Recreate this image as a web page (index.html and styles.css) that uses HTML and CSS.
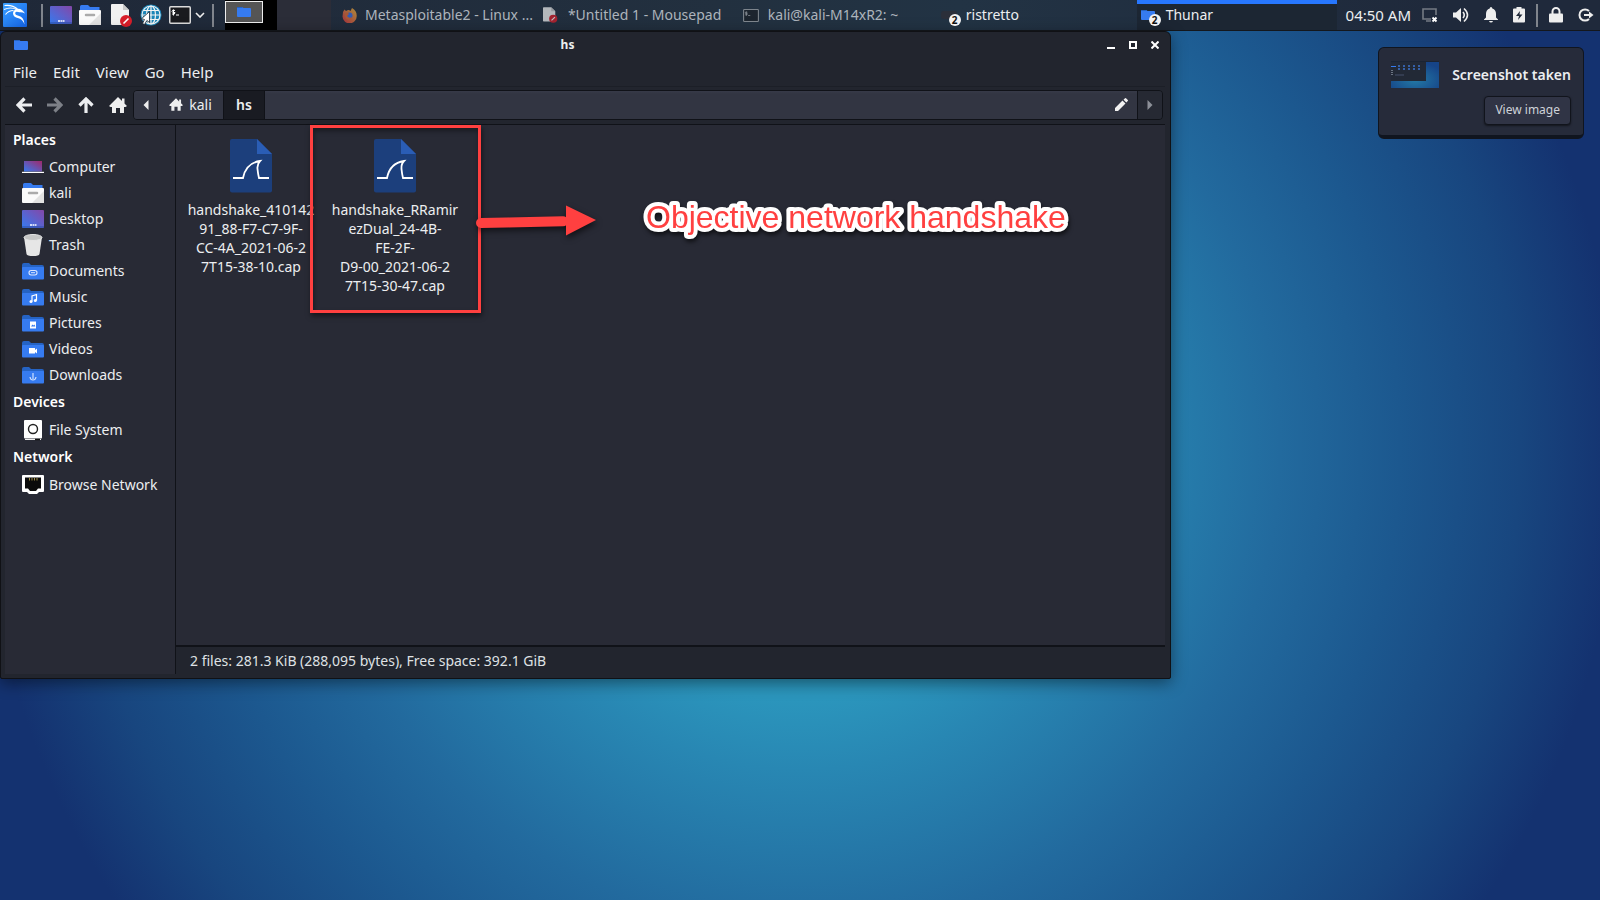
FILE: index.html
```html
<!DOCTYPE html>
<html lang="en">
<head>
<meta charset="utf-8">
<meta name="viewport" content="width=device-width, initial-scale=1">
<title>hs - Thunar</title>
<link rel="stylesheet" href="styles.css">
</head>
<body>
<svg class="defs" aria-hidden="true">
  <defs>
    <linearGradient id="screen" x1="0" y1="1" x2="1" y2="0"><stop offset="0" stop-color="#367bf0"/><stop offset="1" stop-color="#8447a8"/></linearGradient>
    <linearGradient id="laptop" x1="0" y1="1" x2="1" y2="0"><stop offset="0" stop-color="#367bf0"/><stop offset="1" stop-color="#a0286a"/></linearGradient>
    <linearGradient id="kali" x1="0" y1="0" x2="1" y2="1"><stop offset="0" stop-color="#3aa0ff"/><stop offset="1" stop-color="#1464e8"/></linearGradient>
    <linearGradient id="fire" x1="1" y1="0" x2="0" y2="1"><stop offset="0" stop-color="#e8b63a"/><stop offset="1" stop-color="#d8323c"/></linearGradient>
    <radialGradient id="thumb" cx=".5" cy=".7" r=".65"><stop offset="0" stop-color="#2379a5"/><stop offset="1" stop-color="#164488"/></radialGradient>
  </defs>
  <symbol id="desktop" viewBox="0 0 22 18"><rect width="22" height="18" rx="1" fill="url(#screen)"/><path d="M0 17h22" stroke="#2d4ba0" stroke-width="1"/><path d="M8 15h2M10.500 15h2M13 15h1.500" stroke="#fff" stroke-width="1.500"/></symbol>
  <symbol id="home-folder" viewBox="0 0 22 20"><path d="M1 1.500q0-1.500 1.500-1.500H9l2 2h9.500v5H1z" fill="#367bf0"/><rect y="5" width="22" height="15" rx="1" fill="#fafafa"/><path d="M10 20L22 8v12z" fill="#e2e2e2"/><path d="M7 10h8" stroke="#aaa" stroke-width="2.500" stroke-linecap="round"/></symbol>
  <symbol id="folder" viewBox="0 0 22 17"><path d="M0 2q0-2 2-2h5l2 2h11q2 0 2 2v4H0z" fill="#2563c4"/><rect y="4" width="22" height="12.500" rx="1" fill="#367bf0"/></symbol>
  <symbol id="small-folder" viewBox="0 0 14 10"><path d="M0 1q0-1 1-1h4l1.500 1H13q1 0 1 1v7q0 1-1 1H1q-1 0-1-1z" fill="#367bf0"/><path d="M0 0h5l1 1H0z" fill="#2563c4"/></symbol>
  <symbol id="notepad" viewBox="0 0 22 23"><path d="M0 1q0-1 1-1h11l6 6v14q0 1-1 1H1q-1 0-1-1z" fill="#f1f1f1"/><path d="M12 0v6h6z" fill="#c8c8c8"/><circle cx="15" cy="17" r="6" fill="#d81e2a"/><path d="M12.500 19.500l5-5" stroke="#fff" stroke-width="1.600"/></symbol>
  <symbol id="terminal" viewBox="0 0 22 18"><rect x=".75" y=".75" width="20.500" height="16.500" rx="1" fill="#191a1e" stroke="#dcdcdc" stroke-width="1.500"/><path d="M6 4.500q-3-1-3 .8t3 1.200q0 2.500-3 1.500M4.500 3.500v6M7 9h3" stroke="#fff" fill="none"/></symbol>
  <symbol id="house" viewBox="0 0 18 16"><path d="M9 0l4 4V1.500h2.500v5L18 9l-1.500 1H15v6h-4v-5H7v5H3v-6H1.500L0 9z" fill="#eee"/></symbol>
  <symbol id="arrow" viewBox="0 0 16 16"><path d="M8.500 1.500L2 8l6.500 6.500M2 8h14" fill="none" stroke="currentColor" stroke-width="3.200"/></symbol>
  <symbol id="capture" viewBox="0 0 42 54"><path d="M0 2q0-2 2-2h25l15 15v36.500q0 2-2 2H2q-2 0-2-2z" fill="#1c3f7c"/><path d="M27 0l15 15H27z" fill="#2a5db5"/><path d="M3 39h10q3-15 17-17-3 3-2.500 8T29 39h10" fill="none" stroke="#fff" stroke-width="1.800"/></symbol>
</svg>

<header class="panel">
  <div class="launchers">
    <button class="plain" aria-label="Applications"><svg width="24" height="24" viewBox="0 0 24 24"><rect width="24" height="24" rx="1" fill="url(#kali)"/><path d="M1.500 2.500q8-1 13 3.500M1 6.500q7-3 12.500 0M2.500 11.500q3-4 8-4" fill="none" stroke="#fff" stroke-width="1.200"/><path d="M13.500 6q5-1.500 8.500 4.500-2.500-1.500-5.500-1.200-4-1.300-4.300.7-.2 2 3.300 2.700 5.500 1 6 8.800-2-5.500-6-6.300-5.500-1.200-5.500-5 .2-3 3.500-4.200z" fill="#fff"/></svg></button>
    <span class="sep sep-first"></span>
    <button class="plain" aria-label="Show desktop"><svg width="22" height="18"><use href="#desktop"/></svg></button>
    <button class="plain" aria-label="Home folder"><svg width="22" height="20"><use href="#home-folder"/></svg></button>
    <button class="plain editor" aria-label="Text editor"><svg width="22" height="23"><use href="#notepad"/></svg></button>
    <button class="plain" aria-label="Web browser"><svg width="22" height="22" viewBox="0 0 22 22"><circle cx="11" cy="11" r="10.500" fill="#1b86b8"/><g fill="none" stroke="#f4f4f4" stroke-width="1.200"><circle cx="11" cy="11" r="9"/><ellipse cx="11" cy="11" rx="4.500" ry="9"/><path d="M2 11h18M11 2v18M3.500 6.500h15M3.500 15.500h15"/></g><path d="M9.500 7.500v11l-2.600-2-2.400 4-2-1 2-4-3-.8z" fill="#fff" stroke="#17222e" stroke-width=".8"/></svg></button>
    <button class="plain" aria-label="Terminal"><svg width="22" height="18"><use href="#terminal"/></svg></button>
    <button class="plain chevron" aria-label="More terminals"><svg width="10" height="6" viewBox="0 0 10 6"><path d="M1 1l4 4 4-4" fill="none" stroke="#eee" stroke-width="1.600"/></svg></button>
    <span class="sep"></span>
  </div>
  <div class="pager"><span class="workspace"><svg width="14" height="10"><use href="#small-folder"/></svg></span></div>
  <nav class="tasks" aria-label="Open windows">
    <button class="task dim"><span class="task-icon"><svg width="15" height="15" viewBox="0 0 15 15"><path d="M1 4l1.500-2.500L4 3q2-1.500 3-1l1.500 1L10 0q5 3 4.700 8A7 7 0 0 1 .5 8.500z" fill="url(#fire)"/><circle cx="7.500" cy="7.500" r="3" fill="#3a70e8"/><path d="M3 5q3-1 4 1L5 8q2 3 5 1-1 3-4 2.500T3 5z" fill="#e26a33"/></svg></span><span class="task-text">Metasploitable2 - Linux ...</span></button>
    <button class="task dim"><span class="task-icon"><svg width="15" height="16"><use href="#notepad"/></svg></span><span class="task-text">*Untitled 1 - Mousepad</span></button>
    <button class="task dim"><span class="task-icon"><svg width="16" height="13"><use href="#terminal" opacity=".7"/></svg></span><span class="task-text">kali@kali-M14xR2: ~</span></button>
    <button class="task"><span class="task-icon"><svg width="16" height="10" viewBox="0 0 16 10"><rect y="1" width="16" height="8" rx="3" fill="#2b2f3a"/></svg><span class="count">2</span></span><span class="task-text">ristretto</span></button>
    <button class="task active"><span class="task-icon"><svg width="14" height="10"><use href="#small-folder"/></svg><span class="count">2</span></span><span class="task-text">Thunar</span></button>
  </nav>
  <div class="tray">
    <time class="clock">04:50 AM</time>
    <button class="plain" aria-label="Display"><svg width="16" height="16" viewBox="0 0 16 16"><path d="M9 12H1V2h13v6" fill="none" stroke="#747a84" stroke-width="1.600"/><path d="M4 14h5" stroke="#747a84" stroke-width="1.500"/><path d="M10.500 10.500l4 4m0-4l-4 4" stroke="#fff" stroke-width="1.800"/></svg></button>
    <button class="plain" aria-label="Volume"><svg width="16" height="16" viewBox="0 0 16 16"><path d="M0 5.500h3L8 1v14l-5-4.500H0z" fill="#eee"/><path d="M10 5q2.500 3 0 6M11 1.500q7 6.500 0 13" fill="none" stroke="#eee" stroke-width="1.600"/></svg></button>
    <button class="plain" aria-label="Notifications"><svg width="14" height="16" viewBox="0 0 14 16"><path d="M7 0q1.300 0 1.300 1.500Q12 2.500 12 7v3.500l2 2V13H0v-.5l2-2V7q0-4.500 3.700-5.500Q5.700 0 7 0zM5 14h4q-.5 1.500-2 1.500T5 14z" fill="#eee"/></svg></button>
    <button class="plain" aria-label="Battery"><svg width="12" height="16" viewBox="0 0 12 16"><path d="M1 1.500h2.500V0h5v1.500H11q1 0 1 1v12q0 1-1 1H1q-1 0-1-1v-12q0-1 1-1z" fill="#eee"/><path d="M7 4L3 9h3l-1 4 4.500-5.500H6.500z" fill="#1f2838"/></svg></button>
    <span class="sep"></span>
    <button class="plain" aria-label="Lock"><svg width="14" height="16" viewBox="0 0 14 16"><rect y="6.500" width="14" height="9" rx="1" fill="#eee"/><path d="M3.500 7V4.500a3.500 3.500 0 0 1 7 0V7" fill="none" stroke="#eee" stroke-width="2"/></svg></button>
    <button class="plain" aria-label="Log out"><svg width="16" height="14" viewBox="0 0 16 14"><path d="M11 3A5.600 5.600 0 1 0 11 11" fill="none" stroke="#eee" stroke-width="2"/><path d="M6 7h7" stroke="#eee" stroke-width="2"/><path d="M11 3.500L15.500 7 11 10.500z" fill="#eee"/></svg></button>
  </div>
</header>

<main class="desktop">
  <section class="window" aria-label="hs">
    <div class="titlebar">
      <svg width="14" height="10"><use href="#small-folder"/></svg>
      <h1>hs</h1>
      <div class="controls">
        <button class="plain" aria-label="Minimize"><svg width="8" height="8" viewBox="0 0 8 8"><path d="M0 7h8" stroke="#fff" stroke-width="2"/></svg></button>
        <button class="plain" aria-label="Maximize"><svg width="8" height="8" viewBox="0 0 8 8"><rect x="1" y="1" width="6" height="6" fill="none" stroke="#fff" stroke-width="2"/></svg></button>
        <button class="plain" aria-label="Close"><svg width="8" height="8" viewBox="0 0 8 8"><path d="M.5.500l7 7m0-7l-7 7" stroke="#fff" stroke-width="2"/></svg></button>
      </div>
    </div>
    <nav class="menubar" aria-label="Menu">
      <button class="plain">File</button><button class="plain">Edit</button><button class="plain">View</button><button class="plain">Go</button><button class="plain">Help</button>
    </nav>
    <div class="toolbar">
      <div class="nav-buttons">
        <button class="plain" aria-label="Back"><svg width="16" height="16"><use href="#arrow"/></svg></button>
        <button class="plain off" aria-label="Forward"><svg class="flip" width="16" height="16"><use href="#arrow"/></svg></button>
        <button class="plain" aria-label="Up"><svg class="up" width="16" height="16"><use href="#arrow"/></svg></button>
        <button class="plain" aria-label="Home"><svg width="18" height="16"><use href="#house"/></svg></button>
      </div>
      <div class="pathbar">
        <button class="seg step" aria-label="Scroll left"><svg width="6" height="10" viewBox="0 0 6 10"><path d="M5.500 0v10L.5 5z" fill="#eee"/></svg></button>
        <button class="seg kali"><svg width="14" height="13"><use href="#house"/></svg>kali</button>
        <button class="seg current">hs</button>
        <button class="seg edit" aria-label="Edit path"><svg width="13" height="13" viewBox="0 0 13 13"><path d="M0 13v-3l7.500-7.500 3 3L3 13zM8.500 1.700L10 .2q.5-.4 1 0L12.800 2q.4.500 0 1l-1.500 1.500z" fill="#f2f2f2"/></svg></button>
        <button class="seg step last" aria-label="Scroll right"><svg width="6" height="10" viewBox="0 0 6 10"><path d="M.5 0v10l5-5z" fill="#8d9098"/></svg></button>
      </div>
    </div>
    <div class="body">
      <aside class="sidebar">
        <h2>Places</h2>
        <ul>
          <li><a href="#"><svg width="22" height="12" viewBox="0 0 22 12"><rect x="2" width="18" height="10.500" fill="url(#laptop)"/><path d="M0 11.400h22" stroke="#fff" stroke-width="1.200"/></svg>Computer</a></li>
          <li><a href="#"><svg width="22" height="20"><use href="#home-folder"/></svg>kali</a></li>
          <li><a href="#"><svg width="22" height="18"><use href="#desktop"/></svg>Desktop</a></li>
          <li><a href="#"><svg width="22" height="22" viewBox="0 0 22 22"><path d="M2 3l2.500 17q.5 2 6.500 2t6.500-2L20 3z" fill="#e6e6e6"/><ellipse cx="11" cy="3.500" rx="9" ry="3" fill="#c6c6c6" stroke="#e6e6e6"/></svg>Trash</a></li>
          <li><a href="#"><svg width="22" height="17" viewBox="0 0 22 17"><use href="#folder"/><rect x="7" y="7.500" width="8" height="4.500" rx="2.200" fill="none" stroke="#dbe7ff" stroke-width="1.100"/><path d="M9 9.700h4" stroke="#dbe7ff"/></svg>Documents</a></li>
          <li><a href="#"><svg width="22" height="17" viewBox="0 0 22 17"><use href="#folder"/><path d="M10 12.500V7l4.500-1.500v6" fill="none" stroke="#fff" stroke-width="1.200"/><circle cx="9" cy="12.500" r="1.500" fill="#fff"/><circle cx="13.300" cy="11.500" r="1.500" fill="#fff"/></svg>Music</a></li>
          <li><a href="#"><svg width="22" height="17" viewBox="0 0 22 17"><use href="#folder"/><rect x="8" y="6.500" width="6" height="7" fill="#fff"/><path d="M9 11.500l1.500-2 1 1 1-1 .8 2z" fill="#367bf0"/></svg>Pictures</a></li>
          <li><a href="#"><svg width="22" height="17" viewBox="0 0 22 17"><use href="#folder"/><path d="M7 7h6v2l2-1.500v5L13 11v1.500H7z" fill="#fff"/></svg>Videos</a></li>
          <li><a href="#"><svg width="22" height="17" viewBox="0 0 22 17"><use href="#folder"/><path d="M11 6v6M8 10q.5 3 3 3t3-3" fill="none" stroke="#cfe0ff" stroke-width="1.200"/></svg>Downloads</a></li>
        </ul>
        <h2>Devices</h2>
        <ul class="tall">
          <li><a href="#"><svg width="22" height="22" viewBox="0 0 22 22"><rect x="2" y="1" width="18" height="18.500" rx="1" fill="#fff"/><circle cx="11" cy="10" r="4.500" fill="none" stroke="#222" stroke-width="1.400"/><path d="M3 20.500h16" stroke="#eee"/><path d="M13 20.500h5" stroke="#111" stroke-width="1.500"/></svg>File System</a></li>
        </ul>
        <h2>Network</h2>
        <ul class="tall">
          <li><a href="#"><svg width="22" height="19" viewBox="0 0 22 19"><path d="M1 0h20q1 0 1 1v15q0 1-1 1h-4l-2 2H7l-2-2H1q-1 0-1-1V1q0-1 1-1z" fill="#fff"/><path d="M3 2.500h16v11h-3L14 16H8l-2-2.500H3z" fill="#0b0b0b"/><path d="M7.500 3v2.500M10 3v2.500M12.500 3v2.500M15 3v2.500" stroke="#9c8a45"/></svg>Browse Network</a></li>
        </ul>
      </aside>
      <div class="content">
        <div class="files">
          <figure class="file"><svg width="42" height="54"><use href="#capture"/></svg><figcaption>handshake_410142<br>91_88-F7-C7-9F-<br>CC-4A_2021-06-2<br>7T15-38-10.cap</figcaption></figure>
          <figure class="file"><svg width="42" height="54"><use href="#capture"/></svg><figcaption>handshake_RRamir<br>ezDual_24-4B-<br>FE-2F-<br>D9-00_2021-06-2<br>7T15-30-47.cap</figcaption></figure>
          <div class="mark-box"></div>
          <svg class="mark-arrow" width="130" height="40" viewBox="0 0 130 40"><path d="M11 23l82-1.800" stroke="#ff4040" stroke-width="10" stroke-linecap="round"/><path d="M96 5.500L126 20 96 35.500z" fill="#ff4040"/></svg>
          <svg class="mark-text" width="430" height="50"><text class="halo" x="6" y="33" aria-hidden="false">Objective network handshake</text></svg>
        </div>
        <footer class="status">2 files: 281.3 KiB (288,095 bytes), Free space: 392.1 GiB</footer>
      </div>
    </div>
  </section>

  <aside class="notice">
    <svg width="48" height="27" viewBox="0 0 48 27"><rect width="48" height="27" fill="url(#thumb)"/><rect width="35" height="20" fill="#222936"/><path d="M0 .5h48" stroke="#1b2433"/><path d="M0 5.500h5" stroke="#367bf0"/><path d="M7 5h24M7 8h22" stroke="#3560a8" stroke-dasharray="2 3" stroke-width="2"/><path d="M1 9v6" stroke="#6b7482" stroke-dasharray="1 1" stroke-width="2"/><path d="M4 14h9" stroke="#44506a"/></svg>
    <strong>Screenshot taken</strong>
    <button>View image</button>
  </aside>
</main>
</body>
</html>
```
FILE: styles.css
```css
* { box-sizing: border-box; }

body {
  margin: 0;
  min-height: 100vh;
  display: flex;
  flex-direction: column;
  overflow: hidden;
  font: 14px/20px "Noto Sans", sans-serif;
  color: #eceef0;
  background: radial-gradient(circle at center, #2ba3c4 0, #2b95bc 250px, #2887b3 320px, #226a9e 480px, #1c588f 600px, #18467f 720px, #143270 820px);
}

h1, h2, p, ul, figure { margin: 0; padding: 0; }
ul { list-style: none; }
svg { display: block; flex: none; }
button { font: inherit; color: inherit; cursor: pointer; }
.defs { position: absolute; width: 0; height: 0; }

.plain {
  display: flex;
  align-items: center;
  justify-content: center;
  padding: 0;
  border: 0;
  background: none;
}

/* top panel */
.panel {
  display: flex;
  height: 31px;
  flex: none;
  background: linear-gradient(90deg, #1f2838, #22303f 45%, #223344 60%, #1f293b 90%);
  border-bottom: 1px solid #14171c;
}
.sep { width: 2px; height: 23px; background: #80858d; }
.launchers {
  display: flex;
  align-items: center;
  gap: 7px;
  padding: 0 11px 0 3px;
}
.sep-first { margin-left: 7px; }
.editor { margin-left: 3px; }
.chevron { margin-left: -3px; }
.pager { width: 106px; padding-right: 54px; background: linear-gradient(90deg, #000 52px, #2b2d38 52px); }
.workspace {
  display: flex;
  align-items: center;
  justify-content: center;
  width: 38px;
  height: 22px;
  margin-top: 1px;
  border: 1px solid #eee;
  background: #555;
}
.tasks {
  flex: 1;
  min-width: 0;
  display: grid;
  grid-template-columns: repeat(5, minmax(0, 1fr));
  padding-left: 6px;
}
.task {
  display: flex;
  align-items: center;
  gap: 7px;
  padding: 0 4px;
  border: 0;
  background: none;
  white-space: nowrap;
  text-align: left;
}
.task.dim { color: #adb4bc; }
.task.dim svg { opacity: .7; }
.task.active { background: linear-gradient(#2777ff 4px, #1c2633 4px); }
.task-icon { position: relative; width: 18px; display: flex; }
.task.dim .task-icon { width: 20px; justify-content: center; }
.count {
  position: absolute;
  left: 8px;
  top: 4px;
  width: 12px;
  height: 12px;
  border-radius: 50%;
  background: #f2f2f2;
  color: #111;
  font: bold 10px/12px "Noto Sans", sans-serif;
  text-align: center;
}
.tray { display: flex; align-items: center; gap: 15px; padding: 0 6px 0 9px; }
.clock { margin-right: -4px; font-size: 15px; white-space: nowrap; }
.tray .sep { margin: 0 -4px; }

/* file manager window */
.desktop { flex: 1; display: flex; align-items: flex-start; justify-content: space-between; padding-right: 16px; }
.window {
  width: calc(100% - 413px);
  min-height: calc(100vh - 252px);
  display: flex;
  flex-direction: column;
  padding: 0 5px 4px 4px;
  background: #22252e;
  border: 1px solid #101115;
  border-radius: 6px 6px 2px 2px;
  box-shadow: 0 4px 16px rgba(0, 0, 0, .45);
}
.titlebar { display: flex; align-items: center; height: 26px; padding: 0 6px 0 9px; }
.titlebar h1 { flex: 1; font-size: 12px; line-height: 16px; text-align: center; }
.controls { display: flex; gap: 14px; }
.controls .plain { height: 16px; }
.menubar { display: flex; gap: 16px; height: 29px; padding: 0 8px; font-size: 15px; border-bottom: 1px solid #1c1f27; }
.toolbar { display: flex; align-items: center; height: 38px; padding: 0 2px 2px 0; gap: 6px; border-bottom: 1px solid #101218; }
.nav-buttons { display: flex; align-items: center; gap: 15px; padding-left: 11px; }
.off { color: #7d8087; }
.flip { transform: rotate(180deg); }
.up { transform: rotate(90deg); }
.pathbar {
  flex: 1;
  display: flex;
  height: 30px;
  border: 1px solid #101218;
  border-radius: 4px;
  overflow: hidden;
}
.seg {
  display: flex;
  align-items: center;
  justify-content: center;
  gap: 6px;
  padding: 0;
  border: 0;
  border-right: 1px solid #101218;
  background: linear-gradient(#373a48, #323542 3px);
}
.seg.step { width: 24px; }
.seg.kali { width: 66px; }
.seg.current { width: 41px; background: #191b22; font-weight: 600; }
.seg.edit { flex: 1; justify-content: flex-end; padding: 0 9px; }
.seg.last { background: #262933; border-right: 0; }

.body { flex: 1; display: flex; }
.sidebar { width: 171px; padding-top: 1px; background: #282a35; border-right: 1px solid #101218; }
.sidebar h2 { padding-left: 8px; font-size: 14px; line-height: 28px; font-weight: 600; color: #fff; }
.sidebar a {
  display: flex;
  align-items: center;
  gap: 5px;
  height: 26px;
  padding-left: 17px;
  color: inherit;
  text-decoration: none;
  white-space: nowrap;
}
.sidebar .tall a { height: 27px; }
.content { flex: 1; display: flex; flex-direction: column; min-width: 0; }
.files { flex: 1; position: relative; display: flex; align-items: flex-start; gap: 8px; padding: 14px 7px; background: #282a35; }
.file { width: 136px; display: flex; flex-direction: column; align-items: center; gap: 7px; text-align: center; white-space: nowrap; line-height: 19px; }
.status { padding: 4px 14px 3px; border-top: 2px solid #101218; color: #dfe1e4; }

/* annotations drawn over the file list */
.mark-box {
  position: absolute;
  left: 134px;
  top: 0;
  width: 171px;
  height: 188px;
  border: 3px solid #ff4040;
  box-shadow: 1px 3px 5px rgba(0, 0, 0, .5), inset 1px 3px 5px rgba(0, 0, 0, .4);
}
.mark-arrow { position: absolute; left: 294px; top: 75px; filter: drop-shadow(1px 3px 3px rgba(0, 0, 0, .6)); }
.mark-text {
  position: absolute;
  left: 464px;
  top: 70px;
  overflow: visible;
  filter: drop-shadow(1px 3px 2px rgba(0, 0, 0, .6));
}
.mark-text text {
  font: 32px "Liberation Sans", Arial, sans-serif;
  fill: #ff4040;
  stroke: #fff;
  stroke-width: 8px;
  stroke-linejoin: round;
  paint-order: stroke fill;
}

/* notification */
.notice {
  display: grid;
  grid-template-columns: auto auto;
  column-gap: 13px;
  row-gap: 8px;
  align-items: center;
  margin-top: 16px;
  padding: 13px 12px 10px;
  background: #262b3a;
  border: 1px solid #10151f;
  border-bottom-width: 4px;
  border-radius: 6px;
}
.notice strong { font-size: 14px; line-height: 27px; font-weight: 600; white-space: nowrap; }
.notice button {
  grid-column: 2;
  justify-self: end;
  padding: 4px 10px 5px;
  font-size: 12px;
  line-height: 18px;
  color: #ced2d8;
  background: #303445;
  border: 1px solid #11141c;
  border-radius: 4px;
  box-shadow: 0 1px 2px rgba(0, 0, 0, .5);
}
```
